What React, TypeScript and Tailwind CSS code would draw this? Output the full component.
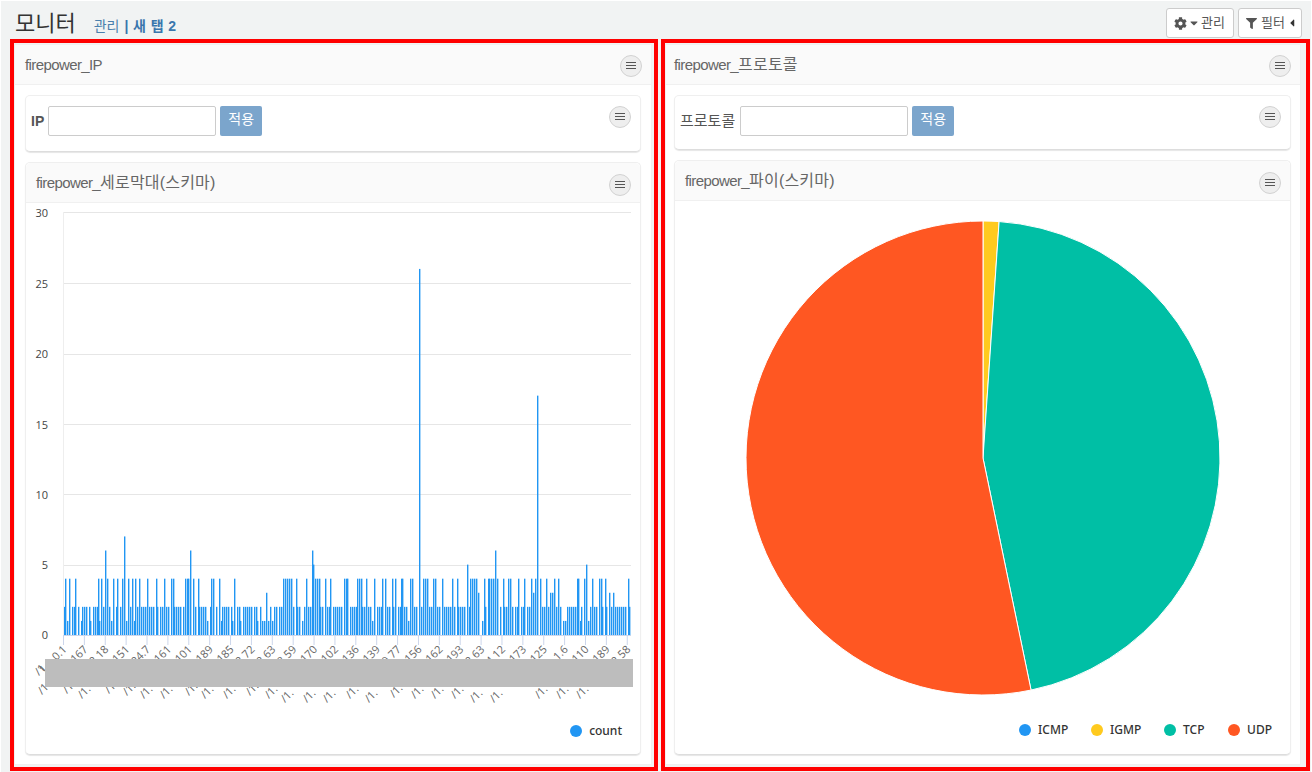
import React from "react";
import { FaCog, FaCaretDown, FaFilter, FaCaretLeft } from "react-icons/fa";

const four = [65,69,75,98,101,107,113,117,122,128,132,135,139,147,156,164,171,173,185,187,188,193,198,211,213,219,234,283,285,287,289,291,296,306,315,317,319,325,330,344,346,347,357,359,361,366,374,382,385,392,395,401,402,410,412,423,425,427,433,435,442,452,457,470,472,474,476,484,488,489,491,493,497,503,508,510,518,524,531,535,540,546,554,558,577,578,584,592,599,601,605,628];
const three = [266,478,533,550,552,609,613];
const one = [67,81,90,99,111,126,134,207,221,232,240,257,262,264,268,272,302,372,408,482,563,565,580,588];
const peaks: [number, number][] = [[105,6],[124,7],[190,6],[312,6],[313,5],[419,26],[467,5],[495,6],[537,17],[586,5]];

const N = 272;
const PITCH = 2.088;
const bars: { x: number; v: number }[] = Array.from({ length: N }, (_, i) => ({ x: Math.round(63.5 + i * PITCH), v: 2 }));
const taken = new Set<number>();
const listed: [number, number][] = [
  ...one.map((x): [number, number] => [x, 1]),
  ...three.map((x): [number, number] => [x, 3]),
  ...four.map((x): [number, number] => [x, 4]),
  ...peaks,
];
for (const [x, v] of listed) {
  const idx = Math.round((x - 63.5) / PITCH);
  if (taken.has(idx)) bars.push({ x, v });
  else {
    taken.add(idx);
    bars[idx] = { x, v };
  }
}

const topLabels = ["1.0.0.1","2.167","2.18","8.151","24.7","3.161","1.101","2.189","9.185","2.72","2.63","3.59","1.170","4.102","1.136","8.139","9.77","6.156","3.162","2.193","2.63","4.12","5.173","8.125","1.1.6","7.110","6.189","2.58"];
const frags: [number, number][] = [[42,670],[45,689],[70,688],[85,693],[112,688],[130,690],[147,693],[167,693],[192,690],[208,693],[230,693],[253,690],[272,693],[288,697],[310,697],[330,697],[353,693],[372,697],[397,692],[418,693],[438,693],[458,693],[477,697],[497,697],[542,693],[563,693],[583,693]];
const gridYs = [212, 283, 354, 424, 494, 565];
const yLabels: [string, number][] = [["30",217],["25",288],["20",358],["15",429],["10",499],["5",569],["0",639]];

const CX = 983, CY = 458, R = 237;
function pt(deg: number) {
  const a = (deg * Math.PI) / 180;
  return [CX + R * Math.sin(a), CY - R * Math.cos(a)];
}
function slice(a: number, b: number) {
  const [x1, y1] = pt(a);
  const [x2, y2] = pt(b);
  return `M${CX} ${CY}L${x1} ${y1}A${R} ${R} 0 ${b - a > 180 ? 1 : 0} 1 ${x2} ${y2}Z`;
}

function MenuDot() {
  return (
    <button className="flex h-[22px] w-[22px] shrink-0 items-center justify-center rounded-full border border-[#d2d2d2] bg-[#eeeeee]">
      <svg width="10" height="8" viewBox="0 0 10 8">
        <path d="M0 .5h10M0 3.5h10M0 6.5h10" stroke="#555" strokeWidth="1" fill="none" />
      </svg>
    </button>
  );
}

function CardHeader({ title, ko, outer, pl }: { title: string; ko: string; outer?: boolean; pl: string }) {
  return (
    <div className={`flex h-10 shrink-0 items-center justify-between border-b border-[#f0f0f0] bg-[#fafafa] ${pl} pr-[9px] text-[15px] tracking-[-0.6px] text-[#666666] ${outer ? "pt-[2px]" : "rounded-t-[5px] pt-[4px]"}`}>
      <span className={outer ? "-mt-[2px]" : "-mt-[4px]"}>
        {title}
        <span className="text-[16px] tracking-[0.2px]">{ko}</span>
      </span>
      <MenuDot />
    </div>
  );
}

function FilterCard({ label, bold, h }: { label: string; bold?: boolean; h: string }) {
  return (
    <div className={`flex ${h} items-start justify-between rounded-[5px] border border-[#efefef] border-b-[#dddddd] bg-white pl-[5px] pr-[9px] pt-[10px] shadow-[0_1px_1px_#e6e6e6]`}>
      <div className="flex items-center">
        <span className={`text-[#555555] ${bold ? "mr-[4px] text-[14px] font-bold" : "mr-[5px] text-[15px]"}`}>{label}</span>
        <div className="h-[30px] w-[168px] rounded-[2px] border border-[#cccccc] bg-white" />
        <button className="ml-1 flex h-[30px] w-[42px] items-center justify-center rounded-[2px] bg-[#7ba5cc] pb-[3px] text-[14px] text-white">적용</button>
      </div>
      <MenuDot />
    </div>
  );
}

function LegendItem({ color, label, w }: { color: string; label: string; w: string }) {
  return (
    <div className={`flex items-center ${w}`}>
      <span className="mr-[7px] h-3 w-3 rounded-full" style={{ backgroundColor: color }} />
      <span className="text-[12px] font-medium text-[#333333]" style={{ fontFamily: '"Noto Sans", sans-serif' }}>{label}</span>
    </div>
  );
}

export default function App() {
  return (
    <div className="h-[772px] w-[1312px] overflow-hidden bg-white pl-px pt-px" style={{ fontFamily: '"Liberation Sans", "Noto Sans CJK KR", sans-serif' }}>
      <div className="h-[771px] w-[1310px] bg-[#f1f3f3]">
        <div className="flex h-[38px] items-start justify-between pl-[14px] pr-[9px]">
          <div className="flex items-baseline pt-[8px]">
            <span className="text-[22px] leading-[30px] text-[#333333]">모니터</span>
            <span className="ml-[18px] text-[14px] text-[#4a80ad]">관리</span>
            <span className="ml-[5px] text-[14px] font-bold tracking-[0.4px] text-[#3a76ad]">| 새 탭 2</span>
          </div>
          <div className="flex gap-1 pt-[7px]">
            <button className="flex h-[30px] w-[68px] items-center justify-start rounded-[3px] border border-[#cccccc] bg-white pl-[7px] text-[13px] text-[#555555]">
              <FaCog size={13} />
              <FaCaretDown size={12} className="ml-[1px]" />
              <span className="ml-[1px]">관리</span>
            </button>
            <button className="flex h-[30px] w-[64px] items-center justify-start rounded-[3px] border border-[#cccccc] bg-white pl-[7px] text-[13px] text-[#555555]">
              <FaFilter size={11} />
              <span className="ml-[4px]">필터</span>
              <FaCaretLeft size={12} className="ml-[1px] text-[#333333]" />
            </button>
          </div>
        </div>
        <div className="ml-[9px] flex gap-[3px]">
          <section className="h-[732px] w-[648px] border-4 border-[#ff0000] pt-px">
            <div className="flex h-[721px] w-[638px] flex-col border border-[#f0f0f0] bg-white">
              <CardHeader title="firepower_IP" ko="" outer pl="pl-[10px]" />
              <div className="flex flex-col gap-[10px] px-[10px] pt-[10px]">
                <FilterCard label="IP" bold h="h-[57px]" />
                <div className="flex h-[593px] flex-col rounded-[5px] border border-[#efefef] border-b-[#dddddd] bg-white shadow-[0_1px_1px_#e6e6e6]">
                  <CardHeader title="firepower_" ko="세로막대(스키마)" pl="pl-[10px]" />
                  <svg viewBox="26 203 614 505" width="614" height="505" className="shrink-0" style={{ fontFamily: '"Open Sans", sans-serif' }}>
                    {gridYs.map((y) => (
                      <line key={y} x1="63" x2="631" y1={y + 0.5} y2={y + 0.5} stroke="#e6e6e6" />
                    ))}
                    <line x1="63.5" x2="63.5" y1="212" y2="635" stroke="#eeeeee" />
                    <line x1="63" x2="631" y1="635.5" y2="635.5" stroke="#ccd6eb" />
                    {bars.map((b, i) => (
                      <rect key={i} x={b.x} y={635 - b.v * 14.08} width="1.4" height={b.v * 14.08} fill="#2196f3" />
                    ))}
                    {yLabels.map(([t, y]) => (
                      <text key={t} x="48" y={y} textAnchor="end" fontSize="11" fill="#444444">{t}</text>
                    ))}
                    {topLabels.map((t, i) => {
                      const x = 63.5 + i * 20.88;
                      return (
                        <g key={i}>
                          <line x1={x} x2={x} y1="636" y2="645" stroke="#ccd6eb" />
                          <text transform={`translate(${x + 4} 650) rotate(-45)`} textAnchor="end" fontSize="11" fill="#666666">{t}</text>
                        </g>
                      );
                    })}
                    {frags.map(([x, y], i) => (
                      <text key={i} transform={`translate(${x - 3} ${y + 6}) rotate(-45)`} fontSize="11" fill="#666666">/1.</text>
                    ))}
                    <rect x="45" y="659" width="588" height="28" fill="#bdbdbd" />
                  </svg>
                  <div className="flex flex-1 items-center justify-end pb-[1px] pr-[18px]">
                    <LegendItem color="#2196f3" label="count" w="" />
                  </div>
                </div>
              </div>
            </div>
          </section>
          <section className="h-[732px] w-[649px] border-4 border-[#ff0000] pt-px">
            <div className="flex h-[721px] w-[636px] flex-col border border-[#f0f0f0] bg-white">
              <CardHeader title="firepower_" ko="프로토콜" outer pl="pl-[8px]" />
              <div className="flex flex-col gap-[10px] pl-[8px] pr-[9px] pt-[10px]">
                <FilterCard label="프로토콜" h="h-[55px]" />
                <div className="flex h-[595px] flex-col rounded-[5px] border border-[#efefef] border-b-[#dddddd] bg-white shadow-[0_1px_1px_#e6e6e6]">
                  <CardHeader title="firepower_" ko="파이(스키마)" pl="pl-[10px]" />
                  <svg viewBox="675 201 615 505" width="615" height="505" className="shrink-0">
                    <path d={slice(0, 3.9)} fill="#ffca1e" stroke="#ffffff" />
                    <path d={slice(3.9, 168.3)} fill="#00bfa5" stroke="#ffffff" />
                    <path d={slice(168.3, 360)} fill="#ff5722" stroke="#ffffff" />
                  </svg>
                  <div className="flex flex-1 items-center justify-end pr-[18px]">
                    <LegendItem color="#2196f3" label="ICMP" w="w-[72px]" />
                    <LegendItem color="#ffca1e" label="IGMP" w="w-[73px]" />
                    <LegendItem color="#00bfa5" label="TCP" w="w-[64px]" />
                    <LegendItem color="#ff5722" label="UDP" w="" />
                  </div>
                </div>
              </div>
            </div>
          </section>
        </div>
      </div>
    </div>
  );
}
